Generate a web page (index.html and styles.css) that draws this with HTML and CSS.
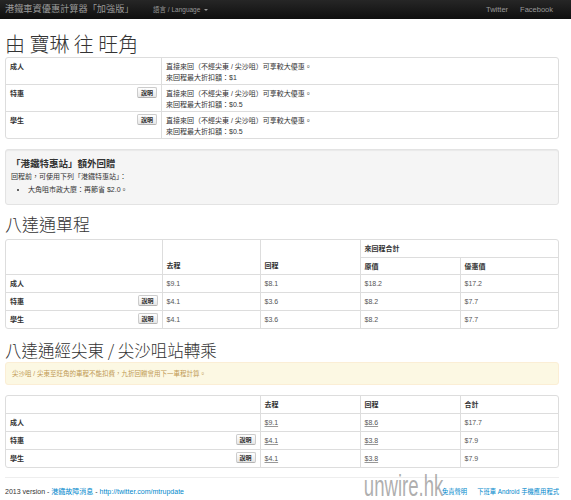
FILE: index.html
```html
<!DOCTYPE html>
<html lang="zh-Hant">
<head>
    <meta charset="UTF-8">
    <title>港鐵車資優惠計算器「加強版」</title>
    <link rel="stylesheet" href="styles.css">
</head>
<body>
    <div class="navbar">
        <span class="brand">港鐵車資優惠計算器「加強版」</span>
        <span class="nav-lang">語言 / Language <span class="caret"></span></span>
        <div class="nav-right">
            <span>Twitter</span>
            <span>Facebook</span>
        </div>
    </div>

    <div class="container">
        <h1>由 寶琳 往 旺角</h1>

        <div class="table-wrap">
            <table class="table table-info">
                <tr>
                    <td class="label-cell"><b>成人</b></td>
                    <td>直接來回（不經尖東 / 尖沙咀）可享較大優惠。<br>來回程最大折扣額：$1</td>
                </tr>
                <tr>
                    <td class="label-cell"><b>特惠</b><button class="btn">說明</button></td>
                    <td>直接來回（不經尖東 / 尖沙咀）可享較大優惠。<br>來回程最大折扣額：$0.5</td>
                </tr>
                <tr>
                    <td class="label-cell"><b>學生</b><button class="btn">說明</button></td>
                    <td>直接來回（不經尖東 / 尖沙咀）可享較大優惠。<br>來回程最大折扣額：$0.5</td>
                </tr>
            </table>
        </div>

        <div class="well">
            <div class="well-title">「港鐵特惠站」額外回贈</div>
            <div>回程前，可使用下列「港鐵特惠站」：</div>
            <ul>
                <li>大角咀市政大廈：再節省 $2.0。</li>
            </ul>
        </div>

        <h2>八達通單程</h2>

        <div class="table-wrap">
            <table class="table table-fare">
                <colgroup>
                    <col style="width:156px">
                    <col style="width:98px">
                    <col style="width:100px">
                    <col style="width:100px">
                    <col>
                </colgroup>
                <tr class="head">
                    <th rowspan="2"></th>
                    <th rowspan="2" class="bottom">去程</th>
                    <th rowspan="2" class="bottom">回程</th>
                    <th colspan="2">來回程合計</th>
                </tr>
                <tr class="head head-sub">
                    <th>原價</th>
                    <th>優惠價</th>
                </tr>
                <tr>
                    <td class="label-cell"><b>成人</b></td>
                    <td class="val">$9.1</td>
                    <td class="val">$8.1</td>
                    <td class="val">$18.2</td>
                    <td class="val">$17.2</td>
                </tr>
                <tr>
                    <td class="label-cell"><b>特惠</b><button class="btn">說明</button></td>
                    <td class="val">$4.1</td>
                    <td class="val">$3.6</td>
                    <td class="val">$8.2</td>
                    <td class="val">$7.7</td>
                </tr>
                <tr>
                    <td class="label-cell"><b>學生</b><button class="btn">說明</button></td>
                    <td class="val">$4.1</td>
                    <td class="val">$3.6</td>
                    <td class="val">$8.2</td>
                    <td class="val">$7.7</td>
                </tr>
            </table>
        </div>

        <h3>八達通經尖東 / 尖沙咀站轉乘</h3>

        <div class="alert">尖沙咀 / 尖東至旺角的車程不能扣費，九折回贈會用下一車程計算。</div>

        <div class="table-wrap">
            <table class="table table-fare">
                <colgroup>
                    <col style="width:254px">
                    <col style="width:100px">
                    <col style="width:100px">
                    <col>
                </colgroup>
                <tr class="head">
                    <th></th>
                    <th>去程</th>
                    <th>回程</th>
                    <th>合計</th>
                </tr>
                <tr>
                    <td class="label-cell"><b>成人</b></td>
                    <td class="val"><span class="fare-link">$9.1</span></td>
                    <td class="val"><span class="fare-link">$8.6</span></td>
                    <td class="val">$17.7</td>
                </tr>
                <tr>
                    <td class="label-cell"><b>特惠</b><button class="btn">說明</button></td>
                    <td class="val"><span class="fare-link">$4.1</span></td>
                    <td class="val"><span class="fare-link">$3.8</span></td>
                    <td class="val">$7.9</td>
                </tr>
                <tr>
                    <td class="label-cell"><b>學生</b><button class="btn">說明</button></td>
                    <td class="val"><span class="fare-link">$4.1</span></td>
                    <td class="val"><span class="fare-link">$3.8</span></td>
                    <td class="val">$7.9</td>
                </tr>
            </table>
        </div>

        <hr>

        <div class="footer">
            <span>2013 version - <a href="#">港鐵故障消息</a> - <a href="#">http://twitter.com/mtrupdate</a></span>
            <span class="footer-right"><a href="#">免責聲明</a><a href="#">下班車 Android 手機應用程式</a></span>
            <span class="watermark">unwire.hk</span>
        </div>
    </div>
</body>
</html>
```

FILE: styles.css
```css
body {
    margin: 0;
    font-family: "Liberation Sans", "Noto Sans CJK TC", sans-serif;
    font-size: 7px;
    line-height: 11px;
    color: #333;
    background: #fff;
}

.navbar {
    height: 19px;
    background: linear-gradient(#262626, #0f0f0f);
    display: flex;
    align-items: center;
    padding: 0 18px 0 5px;
    color: #999;
}

.brand {
    font-size: 9.2px;
    width: 148px;
}

.nav-lang {
    font-size: 6.5px;
}

.caret {
    display: inline-block;
    width: 0;
    height: 0;
    margin-left: 2px;
    vertical-align: middle;
    border-top: 2px solid #999;
    border-left: 2px solid transparent;
    border-right: 2px solid transparent;
}

.nav-right {
    margin-left: auto;
    display: flex;
    gap: 12px;
    font-size: 7.5px;
}

.container {
    width: 554px;
    margin-left: 5px;
    position: relative;
}

h1, h2, h3 {
    font-family: "Noto Sans CJK TC", sans-serif;
    font-weight: 300;
    color: #333;
}

h1 {
    margin: 12px 0 0;
    font-size: 20px;
    line-height: 26px;
}

h2 {
    margin: 5px 0 1px;
    font-size: 17px;
    line-height: 28px;
}

h3 {
    margin: 9px 0 0;
    font-size: 16.5px;
    line-height: 24px;
}

.table-wrap {
    border: 1px solid #ddd;
    border-radius: 3px;
    overflow: hidden;
}

.table {
    width: 100%;
    border-collapse: collapse;
    border-style: hidden;
    table-layout: fixed;
}

.table td,
.table th {
    border: 1px solid #ddd;
    padding: 3px 4px;
    text-align: left;
    vertical-align: top;
}

.table th {
    font-weight: bold;
}

.table th.bottom {
    vertical-align: bottom;
}

.head-sub th {
    padding-bottom: 2px;
}

.table-info td {
    padding: 3px 4px 1px;
}

.table-info .label-cell {
    width: 147px;
}

.val {
    color: #555;
}

.fare-link {
    text-decoration: underline;
    text-decoration-color: #999;
}

.btn {
    float: right;
    box-sizing: border-box;
    width: 20px;
    height: 11px;
    margin-top: -1px;
    padding: 0;
    font-family: "Noto Sans CJK TC", sans-serif;
    font-size: 6px;
    font-weight: bold;
    line-height: 9px;
    color: #333;
    border: 1px solid #ccc;
    border-bottom-color: #b3b3b3;
    border-radius: 2px;
    background: linear-gradient(#fff, #e6e6e6);
}

.well {
    margin-top: 10px;
    padding: 7px 5px 8px;
    background: #f5f5f5;
    border: 1px solid #e3e3e3;
    border-radius: 3px;
    box-shadow: inset 0 1px 1px rgba(0, 0, 0, 0.05);
    line-height: 13px;
}

.well-title {
    font-size: 9.5px;
    font-weight: bold;
}

.well ul {
    margin: 0;
    padding-left: 17px;
}

.alert {
    padding: 5px 6px;
    background: #fcf8e3;
    border: 1px solid #fbeed5;
    border-radius: 3px;
    color: #c09853;
    font-size: 6.5px;
    margin-bottom: 10px;
}

hr {
    margin: 9px 0 0;
    border: 0;
    border-top: 1px solid #eee;
    border-bottom: 1px solid #fff;
}

.footer {
    margin-top: 7px;
    display: flex;
    justify-content: space-between;
    position: relative;
}

.footer a {
    color: #08c;
    text-decoration: none;
}

.footer-right {
    display: flex;
    gap: 10px;
    font-size: 6.3px;
}

.watermark {
    position: absolute;
    right: 116px;
    top: -15px;
    font-family: "Liberation Sans", sans-serif;
    font-size: 30px;
    line-height: 30px;
    color: rgba(140, 140, 140, 0.7);
    transform: scaleX(0.62);
    transform-origin: right center;
}
```
